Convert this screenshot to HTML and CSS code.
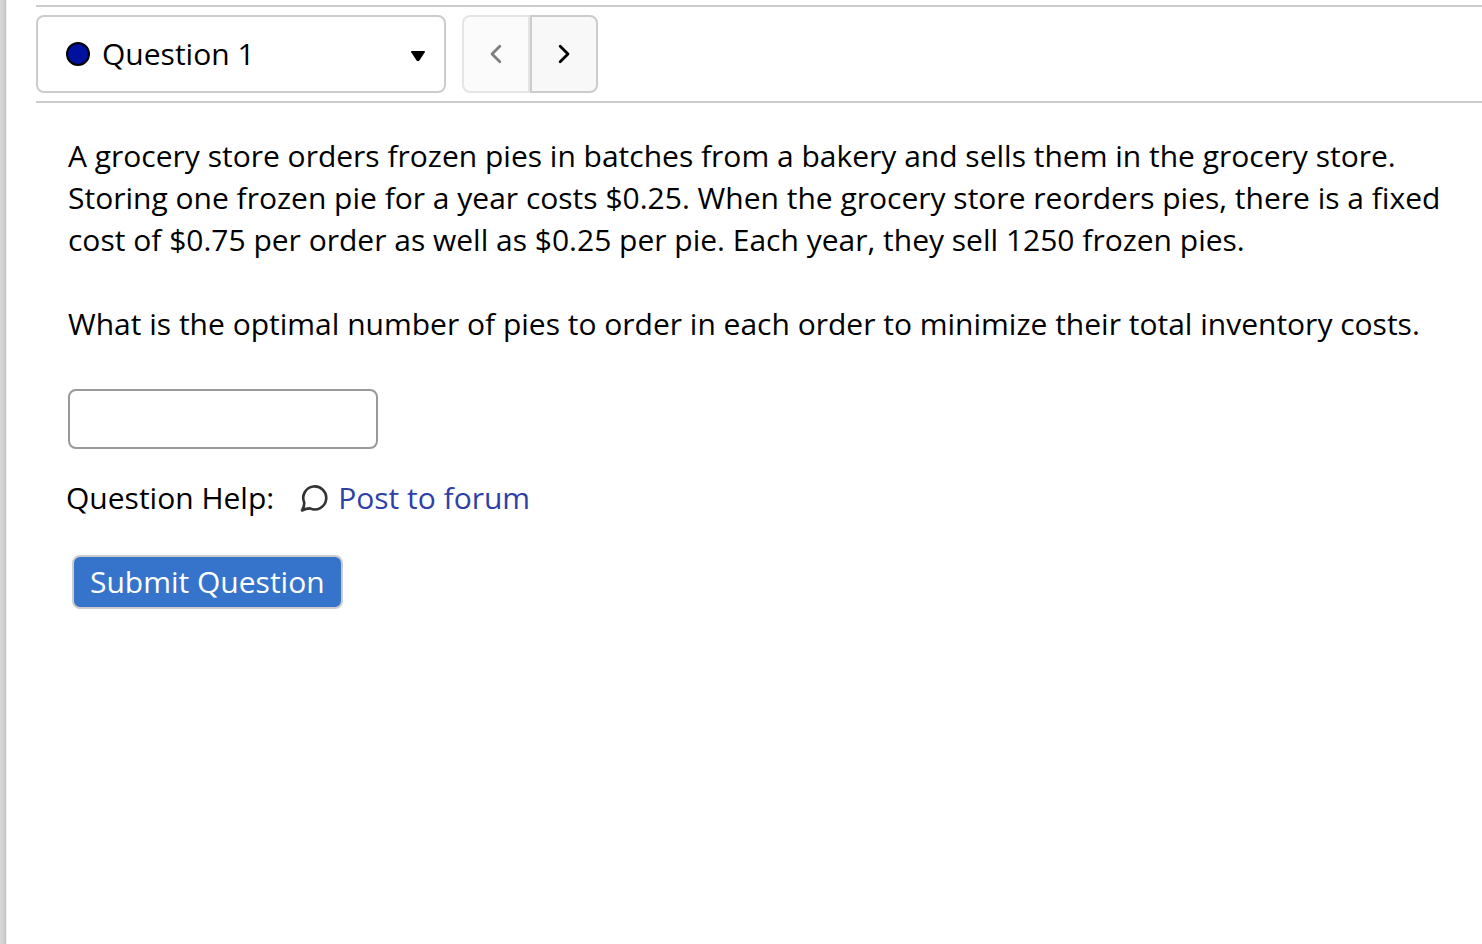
FILE: index.html
```
<!DOCTYPE html>
<html lang="en">
<head>
    <meta charset="UTF-8">
    <meta name="viewport" content="width=device-width, initial-scale=1.0">
    <title>Question 1</title>
    <link rel="stylesheet" href="styles.css">
</head>
<body>
    <main class="page">
        <nav class="question-nav" aria-label="Question navigation">
            <div class="dropdown">
                <span class="status-dot"></span>
                <select class="question-select" id="question" name="question" aria-label="Select question">
                    <option>Question 1</option>
                </select>
                <svg class="caret" width="16" height="16" viewBox="0 0 16 16" aria-hidden="true">
                    <path d="M1.8 5h12.4q1.3.2.6 1.3l-5.4 8.2q-1.4 1.5-2.8 0L1.2 6.3Q.5 5.2 1.8 5z"/>
                </svg>
            </div>
            <div class="pager">
                <button type="button" class="prev" aria-label="Previous question" disabled>
                    <svg width="24" height="24" viewBox="0 0 24 24"><path d="M15.8 4.2L8 12l7.8 7.8"/></svg>
                </button>
                <button type="button" class="next" aria-label="Next question">
                    <svg width="24" height="24" viewBox="0 0 24 24"><path d="M8.2 4.2L16 12l-7.8 7.8"/></svg>
                </button>
            </div>
        </nav>

        <form class="question" id="question-form">
            <p>A grocery store orders frozen pies in batches from a bakery and sells them in the grocery store. Storing one frozen pie for a year costs $0.25. When the grocery store reorders pies, there is a fixed cost of $0.75 per order as well as $0.25 per pie. Each year, they sell 1250 frozen pies.</p>
            <p><label for="answer">What is the optimal number of pies to order in each order to minimize their total inventory costs.</label></p>
            <input type="text" class="answer" id="answer" name="answer" autocomplete="off">
            <div class="help">
                <span>Question Help:</span>
                <a href="#forum">
                    <svg width="28" height="28" viewBox="0 0 28 28" aria-hidden="true">
                        <path d="M2 26.5Q4.5 22.5 4.2 18.5A11.5 11.5 0 1 1 10 24.4Q6 24.4 2 26.5z"/>
                    </svg>
                    Post to forum
                </a>
            </div>
            <button type="submit" class="submit">Submit Question</button>
        </form>
    </main>
</body>
</html>
```

FILE: styles.css
```
* {
    box-sizing: border-box;
}

body {
    margin: 0;
    font-family: "Open Sans", "Noto Sans", sans-serif;
    font-size: 30px;
    line-height: 42px;
    color: #000;
    background-color: #fff;
}

/* grey strip down the left edge */
.page {
    min-height: 100vh;
    padding: 5px 0 0 36px;
    background: linear-gradient(to right, #d8d8da 0, #d0d0d2 4px, #c4c4c6 5px, #c8c8ca 6px, #f0f0f0 6px, #f0f0f0 7px, #fff 7px);
}

/* question picker and prev / next */
.question-nav {
    display: flex;
    gap: 16px;
    padding: 8px 0;
    border-top: 2px solid #ccc;
    border-bottom: 2px solid #ccc;
}

.dropdown {
    display: flex;
    align-items: center;
    width: 410px;
    height: 78px;
    padding: 0 18px 0 28px;
    border: 2px solid #ccc;
    border-radius: 8px;
}

.status-dot {
    width: 24px;
    height: 24px;
    border: 2px solid #000;
    border-radius: 50%;
    background-color: #00109f;
}

.question-select {
    flex: 1;
    height: 100%;
    margin: 0 0 0 12px;
    padding: 0;
    border: none;
    background: none;
    font: inherit;
    color: inherit;
    appearance: none;
}

.caret {
    pointer-events: none;
}

.pager {
    display: flex;
}

.pager button {
    display: flex;
    align-items: center;
    justify-content: center;
    width: 68px;
    padding: 0;
    border: 2px solid #ccc;
    background-color: #f8f8f8;
}

.pager svg {
    fill: none;
    stroke: #000;
    stroke-width: 2.8;
    stroke-linecap: round;
    stroke-linejoin: round;
}

.pager .prev {
    border-radius: 8px 0 0 8px;
    opacity: 0.5;
}

.pager .next {
    border-radius: 0 8px 8px 0;
}

/* question text and answer */
.question {
    padding: 32px;
}

.question p {
    margin: 0 0 42px;
}

.answer {
    display: block;
    width: 310px;
    height: 60px;
    margin-top: 44px;
    padding: 8px 12px;
    border: 2px solid #999;
    border-radius: 8px;
    font: inherit;
}

.help {
    display: flex;
    gap: 26px;
    margin: 28px -2px 36px;
}

.help a {
    display: flex;
    align-items: center;
    gap: 10px;
    color: #2f3fa8;
    text-decoration: none;
}

.help svg {
    fill: none;
    stroke: #333;
    stroke-width: 2.6;
    stroke-linejoin: round;
}

.submit {
    display: block;
    height: 54px;
    margin-left: 4px;
    padding: 0 16px;
    border: 2px solid #ccc;
    border-radius: 8px;
    background-color: #3674cb;
    font: inherit;
    color: #fff;
}
```
